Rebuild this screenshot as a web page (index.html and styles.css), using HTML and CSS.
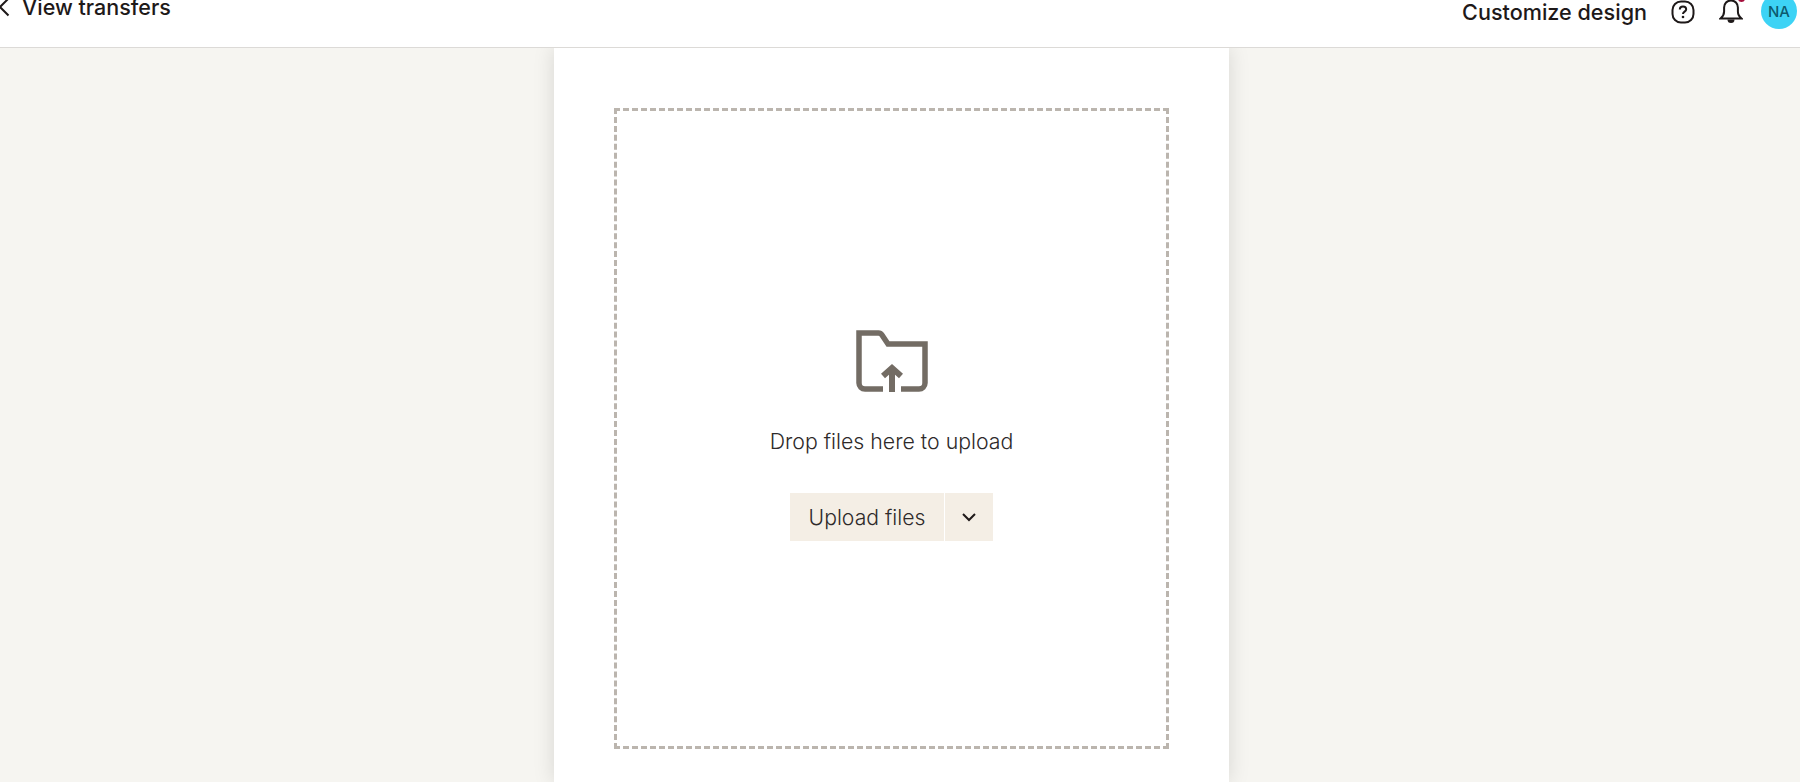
FILE: index.html
```html
<!DOCTYPE html>
<html lang="en">
<head>
<meta charset="utf-8">
<title>Transfer</title>
<link rel="stylesheet" href="styles.css">
</head>
<body>
<header class="topbar">
  <a class="back">
    <svg class="back-icon" width="12" height="24" viewBox="0 0 12 24"><path d="M8.500 3.500 0 12l8.500 8.500" fill="none" stroke="#1e1919" stroke-width="2"/></svg>
    <span>View transfers</span>
  </a>
  <div class="actions">
    <span class="customize">Customize design</span>
    <svg class="icon-help" width="24" height="24" viewBox="0 0 24 24"><rect x="1.500" y="1.500" width="21" height="21" rx="8.500" fill="none" stroke="#1e1919" stroke-width="2"/><path d="M8.800 9.400c0-1.900 1.400-3 3.200-3s3.200 1.100 3.200 2.800c0 2.400-3.200 2.400-3.200 4.800" fill="none" stroke="#1e1919" stroke-width="2"/><circle cx="12" cy="17" r="1.300" fill="#1e1919"/></svg>
    <span class="bell">
      <svg width="24" height="26" viewBox="0 0 24 26"><path d="M1.500 19.500c2.500-2 3.600-3.600 3.600-7V8.500C5.100 4.500 8 1.500 12 1.500s6.900 3 6.900 7v4c0 3.400 1.100 5 3.600 7z" fill="none" stroke="#1e1919" stroke-width="2"/><path d="M8.500 20.500a3.500 3.500 0 0 0 7 0z" fill="#1e1919"/></svg>
      <i class="dot"></i>
    </span>
    <span class="avatar">NA</span>
  </div>
</header>
<main class="stage">
  <section class="card">
    <div class="drop">
      <svg class="folder" width="72" height="62" viewBox="0 0 72 62"><path d="M27 59H9a6 6 0 0 1-6-6V3h19.500a4 4 0 0 1 3.300 1.800L32 14h37v39a6 6 0 0 1-6 6H45" fill="none" stroke="#736c64" stroke-width="5.500"/><path d="M36 62V37M27 46l9-8 9 8" fill="none" stroke="#736c64" stroke-width="6"/></svg>
      <p class="hint">Drop files here to upload</p>
      <div class="split">
        <button class="btn main">Upload files</button>
        <button class="btn caret"><svg width="16" height="10" viewBox="0 0 16 10"><path d="M2 2l6 6 6-6" fill="none" stroke="#1e1919" stroke-width="2"/></svg></button>
      </div>
    </div>
  </section>
</main>
</body>
</html>
```
FILE: styles.css
```css
* { box-sizing: border-box; }
html, body { margin: 0; height: 782px; overflow: hidden; }
body {
  font-family: "Inter", "Liberation Sans", sans-serif;
  background: #f6f5f1;
  color: #1e1919;
  display: flex;
  flex-direction: column;
}
.topbar {
  position: relative;
  z-index: 1;
  height: 48px;
  flex: none;
  background: #fff;
  border-bottom: 1px solid #dcdad7;
  display: flex;
  justify-content: space-between;
  overflow: hidden;
}
.back {
  display: flex;
  align-items: center;
  gap: 10px;
  height: 13px;
  margin-left: 0;
  font-size: 21.500px;
  font-weight: 500;
}
.back-icon { flex: none; }
.actions {
  display: flex;
  align-items: center;
  height: 23px;
  padding-right: 3px;
}
.customize { font-size: 21.600px; font-weight: 500; margin-right: 24px; }
.icon-help { margin-right: 24px; }
.bell { position: relative; display: flex; margin-right: 18px; }
.dot {
  position: absolute;
  top: -2px;
  right: -2px;
  width: 7px;
  height: 5px;
  border-radius: 0 0 4px 4px;
  background: #a50f3c;
}
.avatar {
  width: 36px;
  height: 36px;
  margin-top: -1px;
  border-radius: 50%;
  background: #3dd3f5;
  color: #0d5a6e;
  font-size: 15px;
  font-weight: 500;
  display: flex;
  align-items: center;
  justify-content: center;
}
.stage { flex: 1; display: flex; justify-content: center; min-height: 0; padding-right: 17px; }
.card {
  width: 675px;
  background: #fff;
  box-shadow: 0 0 20px rgba(0, 0, 0, .13);
  padding: 60px 60px 0;
}
.drop {
  width: 555px;
  height: 641px;
  border: 3px dashed #bbb5ae;
  display: flex;
  flex-direction: column;
  align-items: center;
  justify-content: center;
  padding-top: 13px;
}
.folder { display: block; }
.hint { margin: 36px 0 0; font-size: 21.300px; font-weight: 350; color: #2e2a2a; }
.split { display: flex; gap: 1px; margin-top: 39px; }
.btn {
  height: 48px;
  border: 0;
  background: #f4eee5;
  font: inherit;
  font-size: 21.200px;
  font-weight: 350;
  color: #2e2a2a;
  padding: 0;
}
.main { width: 154px; }
.caret { width: 48px; display: flex; align-items: center; justify-content: center; }
```
